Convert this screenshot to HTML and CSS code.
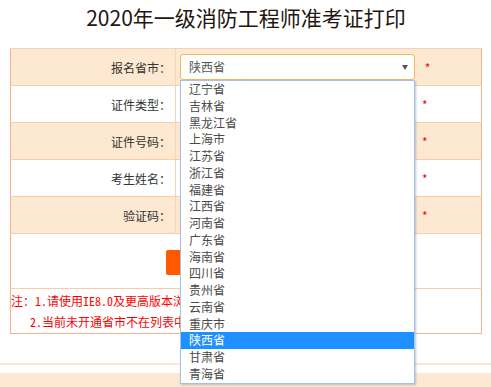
FILE: index.html
```html
<!DOCTYPE html>
<html lang="zh-CN">
<head>
    <meta charset="UTF-8">
    <title>2020年一级消防工程师准考证打印</title>
    <link rel="stylesheet" href="styles.css">
</head>
<body>
    <div class="container">
        <h1>2020年一级消防工程师准考证打印</h1>
        <table class="form">
            <tbody>
                <tr class="odd">
                    <td class="label">报名省市：</td>
                    <td class="field">
                        <div class="select-wrap">
                            <div class="select">陕西省<span class="arrow"></span></div>
                            <ul class="options">
                                <li>辽宁省</li>
                                <li>吉林省</li>
                                <li>黑龙江省</li>
                                <li>上海市</li>
                                <li>江苏省</li>
                                <li>浙江省</li>
                                <li>福建省</li>
                                <li>江西省</li>
                                <li>河南省</li>
                                <li>广东省</li>
                                <li>海南省</li>
                                <li>四川省</li>
                                <li>贵州省</li>
                                <li>云南省</li>
                                <li>重庆市</li>
                                <li class="selected">陕西省</li>
                                <li>甘肃省</li>
                                <li>青海省</li>
                            </ul>
                        </div>
                        <span class="req">*</span>
                    </td>
                </tr>
                <tr>
                    <td class="label">证件类型：</td>
                    <td class="field"><div class="input"></div><span class="req">*</span></td>
                </tr>
                <tr class="odd">
                    <td class="label">证件号码：</td>
                    <td class="field"><div class="input"></div><span class="req">*</span></td>
                </tr>
                <tr>
                    <td class="label">考生姓名：</td>
                    <td class="field"><div class="input"></div><span class="req">*</span></td>
                </tr>
                <tr class="odd">
                    <td class="label">验证码：</td>
                    <td class="field"><div class="input"></div><span class="req">*</span></td>
                </tr>
                <tr>
                    <td colspan="2" class="actions"><button class="btn">查询</button></td>
                </tr>
                <tr>
                    <td colspan="2" class="notes">
                        <p>注：1.请使用IE8.0及更高版本浏览器，</p>
                        <p class="indent">2.当前未开通省市不在列表中显示。</p>
                    </td>
                </tr>
            </tbody>
        </table>
    </div>
    <div class="footer"></div>
</body>
</html>
```

FILE: styles.css
```css
body {
    font-family: "Noto Sans CJK SC", sans-serif;
    background-color: #fff;
    margin: 0;
    padding: 0;
}

.container {
    padding: 0 9px 0 10px;
}

h1 {
    font-size: 21px;
    font-weight: normal;
    color: #231510;
    text-align: center;
    margin: 0;
    height: 48px;
    line-height: 34px;
}

table.form {
    width: 472px;
    border-collapse: collapse;
    border-left: 1px solid #f0b48c;
    border-right: 1px solid #f0b48c;
    border-bottom: 1px solid #f0b48c;
    border-top: 1px solid #f6d2bb;
    font-size: 12px;
}

td {
    border-bottom: 1px solid #f7ccab;
    padding: 0;
    vertical-align: middle;
}

tr.odd td {
    background-color: #fde9d1;
}

td.label {
    width: 160px;
    height: 36px;
    padding-right: 4px;
    text-align: right;
    color: #333;
    border-right: 1px solid #f7d4b8;
}

td.field {
    padding-left: 4px;
    white-space: nowrap;
}

.select-wrap {
    position: relative;
    display: inline-block;
    vertical-align: middle;
}

.select {
    width: 217px;
    height: 24px;
    line-height: 24px;
    padding-left: 8px;
    padding-right: 8px;
    border: 1px solid #f3b862;
    border-radius: 3px;
    background-color: #fff;
    color: #555;
    position: relative;
}

.arrow {
    position: absolute;
    right: 6px;
    top: 10px;
    border-left: 3px solid transparent;
    border-right: 3px solid transparent;
    border-top: 5px solid #555;
}

.options {
    position: absolute;
    left: 0;
    top: 26px;
    width: 233px;
    margin: 0;
    padding: 0;
    list-style: none;
    background-color: #fff;
    border: 1px solid #a9bfe3;
    box-shadow: 1px 1px 2px rgba(120, 140, 180, 0.5);
    z-index: 10;
}

.options li {
    height: 16.75px;
    line-height: 16.75px;
    padding-left: 8px;
    color: #4a4a4a;
}

.options li.selected {
    background-color: #1e90ff;
    color: #fff;
}

.input {
    display: inline-block;
    vertical-align: middle;
    width: 233px;
    height: 24px;
    border: 1px solid #d9d9d9;
    border-radius: 3px;
    background-color: #fff;
}

.req {
    color: #f00;
    font-size: 12px;
    margin-left: 7px;
    vertical-align: middle;
}

td.actions {
    height: 54px;
    text-align: center;
}

.btn {
    width: 160px;
    height: 25px;
    margin-top: 3px;
    border: none;
    border-radius: 2px;
    background-color: #ff5a00;
    color: #fff;
    font-family: "Noto Sans CJK SC", sans-serif;
    font-size: 13px;
}

td.notes {
    height: 44px;
    border-bottom: none;
    color: #f00;
    font-family: "Noto Sans Mono CJK SC", "Noto Sans CJK SC", monospace;
    font-size: 12px;
}

.notes p {
    margin: 0;
    line-height: 21px;
}

.notes .indent {
    padding-left: 19px;
}

.footer {
    margin-top: 29px;
    border-top: 2px solid #fde5d3;
    height: 8px;
    border-bottom: 20px solid #fde9d1;
}
```
